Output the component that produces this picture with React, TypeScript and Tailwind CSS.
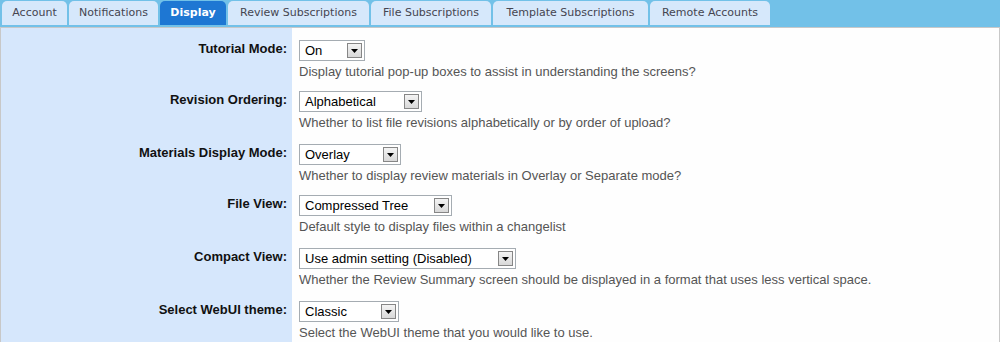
import React from "react";

const tabs = [
  { label: "Account", w: 65 },
  { label: "Notifications", w: 89 },
  { label: "Display", w: 66, active: true },
  { label: "Review Subscriptions", w: 141 },
  { label: "File Subscriptions", w: 120 },
  { label: "Template Subscriptions", w: 155 },
  { label: "Remote Accounts", w: 120 },
];

const rows = [
  { label: "Tutorial Mode:", value: "On", w: 66, h: 51, desc: "Display tutorial pop-up boxes to assist in understanding the screens?" },
  { label: "Revision Ordering:", value: "Alphabetical", w: 123, h: 53, desc: "Whether to list file revisions alphabetically or by order of upload?" },
  { label: "Materials Display Mode:", value: "Overlay", w: 102, h: 51, desc: "Whether to display review materials in Overlay or Separate mode?" },
  { label: "File View:", value: "Compressed Tree", w: 153, h: 53, desc: "Default style to display files within a changelist" },
  { label: "Compact View:", value: "Use admin setting (Disabled)", w: 217, h: 53, desc: "Whether the Review Summary screen should be displayed in a format that uses less vertical space." },
  { label: "Select WebUI theme:", value: "Classic", w: 100, h: 53, desc: "Select the WebUI theme that you would like to use." },
];

function Select({ value, w }: { value: string; w: number }) {
  return (
    <div
      className="h-[21px] shrink-0 border border-[#a5acb2] bg-white flex items-center justify-between pl-[5px] pr-[2px]"
      style={{ width: w }}
    >
      <span className="text-[13px] leading-[15px] text-black">{value}</span>
      <div className="w-[15px] h-[15px] border border-[#868686] bg-gradient-to-b from-[#f4f4f4] to-[#d8d8d8] flex items-center justify-center">
        <svg width="7" height="4" viewBox="0 0 7 4">
          <polygon points="0,0 7,0 3.5,4" fill="#000" />
        </svg>
      </div>
    </div>
  );
}

export default function App() {
  return (
    <div className="w-[1000px] h-[342px] overflow-hidden bg-white font-['Liberation_Sans',Arial,sans-serif]">
      <div className="h-[27px] bg-[#72c1e8] flex items-start pl-[2px] pt-[1px] gap-[2px] font-['DejaVu_Sans',Verdana,sans-serif] text-[11px]">
        {tabs.map((t) => (
          <div
            key={t.label}
            className={
              t.active
                ? "h-[24px] rounded-t-[5px] bg-[#1e77d3] text-white font-bold flex items-center justify-center"
                : "h-[24px] rounded-t-[5px] bg-[#d6e8fb] text-[#454550] flex items-center justify-center"
            }
            style={{ width: t.w }}
          >
            {t.label}
          </div>
        ))}
      </div>
      <div className="border-t border-l border-r border-[#c8c8c8] h-[315px] overflow-hidden flex items-stretch bg-[#fefefe]">
        <div className="w-[291px] shrink-0 bg-[#d6e7fc] pt-[12px] flex flex-col">
          {rows.map((r) => (
            <div key={r.label} className="shrink-0 flex justify-end pr-[5px] pt-[1px]" style={{ height: r.h }}>
              <span className="text-[13px] leading-[15px] font-bold text-[#111]">{r.label}</span>
            </div>
          ))}
        </div>
        <div className="flex-1 pt-[12px] pl-[7px] flex flex-col">
          {rows.map((r) => (
            <div key={r.label} className="shrink-0 flex flex-col" style={{ height: r.h }}>
              <Select value={r.value} w={r.w} />
              <div className="mt-[3px] text-[13px] leading-[15px] text-[#555]">{r.desc}</div>
            </div>
          ))}
        </div>
      </div>
    </div>
  );
}
